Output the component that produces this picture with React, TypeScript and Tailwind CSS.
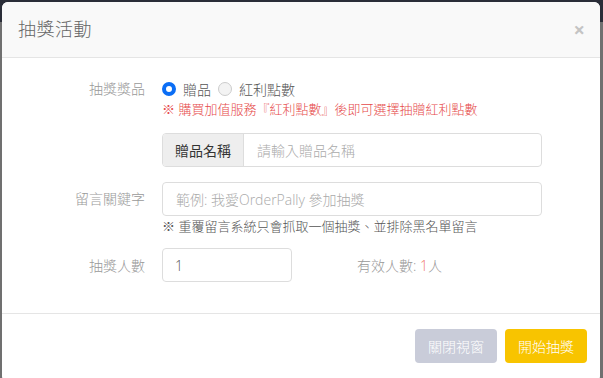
import React, { useState } from 'react';

const font = { fontFamily: '"Open Sans", "Noto Sans CJK TC", sans-serif' };

const App = () => {
  const [prize, setPrize] = useState('gift');

  return (
    <div className="w-[603px] h-[378px] overflow-hidden bg-[#707070] relative" style={font}>
      <div className="h-[22px] bg-[#2a2d38]" />
      <div className="absolute left-[2px] top-[2px] w-[598px] h-[380px] bg-white rounded-[6px] overflow-hidden flex flex-col">
        <div className="h-[56px] bg-[#f9f9f9] border-b border-[#e5e5e5] flex items-center justify-between pl-[16px] pr-[15px]">
          <h3 className="text-[18px] font-light text-[#666] tracking-[0.5px]">抽獎活動</h3>
          <span className="text-[20px] font-bold text-[#c4c4c4] leading-none">×</span>
        </div>

        <div className="h-[255px] px-[15px] pt-[20px] text-[14px] font-light">
          <div className="flex">
            <div className="w-[128px] text-right text-[#999] leading-[22px]">抽獎獎品</div>
            <div className="ml-[17px]">
              <div className="flex items-center h-[22px] text-[#555]">
                <label className="flex items-center cursor-pointer" onClick={() => setPrize('gift')}>
                  <span className={`w-[14px] h-[14px] rounded-full ${prize === 'gift' ? 'border-[4px] border-[#0b6ef5]' : 'border border-[#ccc] bg-[#f3f3f3]'}`} />
                  <span className="ml-[7px]">贈品</span>
                </label>
                <label className="flex items-center ml-[7px] cursor-pointer" onClick={() => setPrize('points')}>
                  <span className={`w-[14px] h-[14px] rounded-full ${prize === 'points' ? 'border-[4px] border-[#0b6ef5]' : 'border border-[#ccc] bg-[#f3f3f3]'}`} />
                  <span className="ml-[7px]">紅利點數</span>
                </label>
              </div>
              <p className="text-[13px] text-[#e64a4a] leading-[18px]">※ 購買加值服務『紅利點數』後即可選擇抽贈紅利點數</p>
            </div>
          </div>

          <div className="flex mt-[15px]">
            <div className="w-[128px]" />
            <div className="ml-[17px] flex w-[380px] h-[34px] border border-[#ddd] rounded-[4px] overflow-hidden">
              <span className="w-[81px] bg-[#eee] border-r border-[#ddd] flex items-center justify-center text-[#333] font-normal">贈品名稱</span>
              <input className="flex-1 px-[13px] outline-none text-[#555] placeholder:text-[#aaa]" placeholder="請輸入贈品名稱" />
            </div>
          </div>

          <div className="flex mt-[15px] items-start">
            <div className="w-[128px] text-right text-[#999] leading-[34px]">留言關鍵字</div>
            <div className="ml-[17px]">
              <input className="w-[380px] h-[34px] border border-[#ddd] rounded-[4px] px-[13px] outline-none text-[#555] placeholder:text-[#aaa]" placeholder="範例: 我愛OrderPally 參加抽獎" />
              <p className="text-[13px] text-[#555] leading-[20px]">※ 重覆留言系統只會抓取一個抽獎、並排除黑名單留言</p>
            </div>
          </div>

          <div className="flex mt-[12px] items-center">
            <div className="w-[128px] text-right text-[#999]">抽獎人數</div>
            <input className="ml-[17px] w-[130px] h-[34px] border border-[#ddd] rounded-[4px] px-[12px] outline-none text-[#555]" defaultValue="1" />
            <span className="ml-[65px] text-[#999]">有效人數: <span className="text-[#f0776c]">1</span>人</span>
          </div>
        </div>

        <div className="border-t border-[#e5e5e5] flex justify-end gap-[8px] pr-[13px] pt-[15px]">
          <button className="w-[82px] h-[34px] rounded-[4px] bg-[#c9ccd9] text-white text-[14px] font-light">關閉視窗</button>
          <button className="w-[82px] h-[34px] rounded-[4px] bg-[#f8c400] text-white text-[14px] font-light">開始抽獎</button>
        </div>
      </div>
    </div>
  );
};

export default App;
